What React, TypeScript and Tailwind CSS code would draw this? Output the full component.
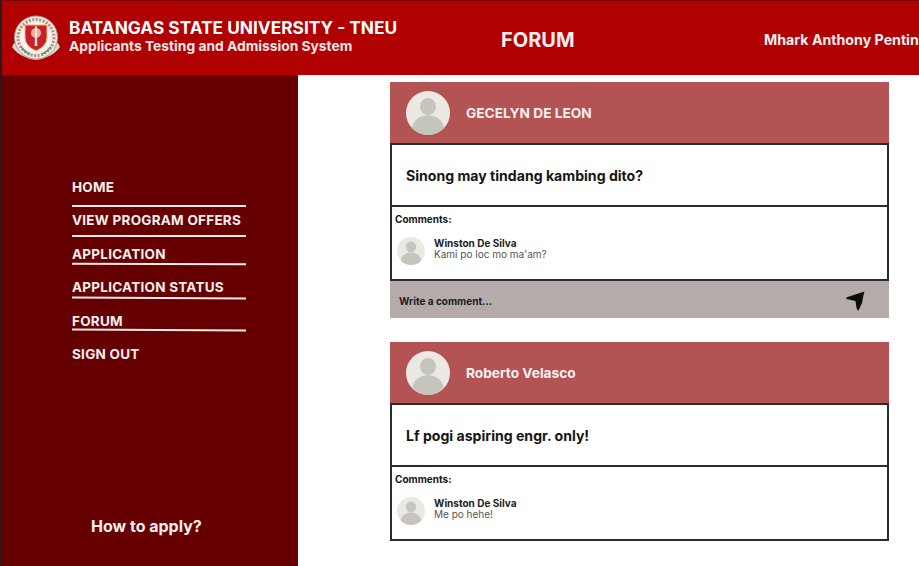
import React from 'react';

const font = { fontFamily: 'Inter, "Noto Sans", sans-serif' };

const Seal: React.FC = () => (
  <svg width="50" height="48" viewBox="0 0 50 48" className="shrink-0">
    <path d="M3 29 L1 33 Q6 40 14 43 Q25 49 36 43 Q44 40 49 33 L47 29 Z" fill="#d8d8d0" />
    <circle cx="25" cy="23.5" r="21.5" fill="#f0ece8" />
    <circle cx="25" cy="23.5" r="21.5" fill="none" stroke="#a89c98" strokeWidth="1" />
    <circle cx="25" cy="23.5" r="18" fill="none" stroke="#b98a88" strokeWidth="3" strokeDasharray="2 1.5" />
    <circle cx="25" cy="23.5" r="14.5" fill="#fbf6f2" />
    <path d="M14 11 H36 V24 Q36 32 25 37 Q14 32 14 24 Z" fill="#c8202a" stroke="#e8c860" strokeWidth="1" />
    <circle cx="25" cy="19" r="5" fill="#f0b0a0" />
    <path d="M24.2 12 H25.8 L26.3 32 H23.7 Z" fill="#fbe8d8" />
    <path d="M10 33 Q14 38 19 40" fill="none" stroke="#5a9a60" strokeWidth="1.5" />
    <path d="M40 33 Q36 38 31 40" fill="none" stroke="#5a9a60" strokeWidth="1.5" />
  </svg>
);

const Avatar: React.FC<{ size: number; className?: string }> = ({ size, className }) => (
  <svg width={size} height={size} viewBox="0 0 44 44" className={`shrink-0 ${className ?? ''}`}>
    <defs>
      <clipPath id={`avatar-${size}`}>
        <circle cx="22" cy="22" r="22" />
      </clipPath>
    </defs>
    <circle cx="22" cy="22" r="22" fill="#ece9e4" />
    <g clipPath={`url(#avatar-${size})`} fill="#c5c4bd">
      <ellipse cx="22" cy="15.5" rx="8" ry="8.5" />
      <path d="M6 44 Q4 26 22 24 Q40 26 38 44 Z" />
    </g>
  </svg>
);

const SendIcon: React.FC = () => (
  <svg width="20" height="20" viewBox="0 0 20 20" className="shrink-0">
    <path
      d="M19.5 0.5 Q19 1 17 12 L13.5 19.5 Q12.5 19.5 11.5 17 L10.5 10 L4 8.5 Q1 8 0.8 7 Q1 6.5 4 5.5 Z"
      fill="#0c0c0c"
    />
  </svg>
);

const NavItem: React.FC<{ label: string; line?: string }> = ({ label, line }) => (
  <div className="h-[33.4px] relative">
    <div className="text-[13.5px] leading-[33px] font-bold text-[#f6eeee] tracking-[0.25px]">{label}</div>
    {line && <div className={`absolute left-0 w-[174px] h-[2px] bg-[#f4eaea] ${line}`} />}
  </div>
);

const Post: React.FC<{
  author: string;
  text: string;
  commenter: string;
  comment: string;
  showInput?: boolean;
}> = ({ author, text, commenter, comment, showInput }) => (
  <div className="w-[499px]">
    <div className="h-[61px] bg-[#b35353] flex items-center pl-4 gap-[16px]">
      <Avatar size={44} className="mt-[1px]" />
      <div className="text-[13.7px] font-bold text-[#f8f0ef] mt-[1px]">{author}</div>
    </div>
    <div className="h-[64px] border-2 border-[#2b2b2b] flex items-center pl-[14px] pt-[1px] text-[14.1px] font-bold text-[#161616]">
      {text}
    </div>
    <div className="h-[74px] border-2 border-t-0 border-[#2b2b2b] pl-[3px] pt-[6px]">
      <div className="text-[10px] leading-[12px] font-bold text-[#161616]">Comments:</div>
      <div className="flex items-start gap-[9px] mt-[11px] pl-[2px]">
        <Avatar size={28} className="mt-[1px]" />
        <div className="mt-[2px]">
          <div className="text-[10px] leading-[11px] font-bold text-[#1c1c1c]">{commenter}</div>
          <div className="text-[10px] leading-[11px] text-[#555555]">{comment}</div>
        </div>
      </div>
    </div>
    {showInput && (
      <div className="h-[37px] bg-[#b5abaa] flex items-center justify-between pl-[9px] pr-[24px] pt-[3px]">
        <div className="text-[10px] font-bold text-[#1c1c1c]">Write a comment...</div>
        <SendIcon />
      </div>
    )}
  </div>
);

export default function App() {
  return (
    <div style={font} className="w-[919px] h-[566px] overflow-hidden bg-white flex flex-col">
      <header className="h-[75px] shrink-0 bg-[#b00000] border-t border-[#7a0000] border-l-2 border-l-[#2a1a1a] flex items-center">
        <div className="w-[499px] shrink-0 flex items-center pl-[9px] gap-[8px] -mt-[1px]">
          <Seal />
          <div className="text-white whitespace-nowrap -mt-[4px]">
            <div className="text-[17.3px] leading-[22px] font-bold">BATANGAS STATE UNIVERSITY - TNEU</div>
            <div className="text-[13.8px] leading-[15px] font-bold text-[#f6e6e6]">Applicants Testing and Admission System</div>
          </div>
        </div>
        <div className="w-[263px] shrink-0 text-[20px] font-bold text-[#f8eeee] mt-[3px]">FORUM</div>
        <div className="text-[14.2px] font-bold text-[#f8eeee] whitespace-nowrap mt-[3px]">Mhark Anthony Pentin</div>
      </header>
      <div className="flex-1 flex min-h-0">
        <aside className="w-[298px] shrink-0 bg-[#660000] border-l-2 border-l-[#2a1a1a] flex flex-col pl-[70px]">
          <nav className="pt-[96px]">
            <NavItem label="HOME" line="top-[34px]" />
            <NavItem label="VIEW PROGRAM OFFERS" line="top-[30.6px]" />
            <NavItem label="APPLICATION" line="top-[25.2px] rotate-[0.15deg]" />
            <NavItem label="APPLICATION STATUS" line="top-[25.8px] rotate-[0.4deg]" />
            <NavItem label="FORUM" line="top-[24.4px] rotate-[0.3deg]" />
            <NavItem label="SIGN OUT" />
          </nav>
          <div className="mt-[143px] pl-[19px] text-[16px] font-bold text-[#f8f0f0]">How to apply?</div>
        </aside>
        <main className="flex-1 pl-[92px] pt-[7px] flex flex-col gap-[24px]">
          <Post
            author="GECELYN DE LEON"
            text="Sinong may tindang kambing dito?"
            commenter="Winston De Silva"
            comment="Kami po loc mo ma'am?"
            showInput
          />
          <Post
            author="Roberto Velasco"
            text="Lf pogi aspiring engr. only!"
            commenter="Winston De Silva"
            comment="Me po hehe!"
          />
        </main>
      </div>
    </div>
  );
}
